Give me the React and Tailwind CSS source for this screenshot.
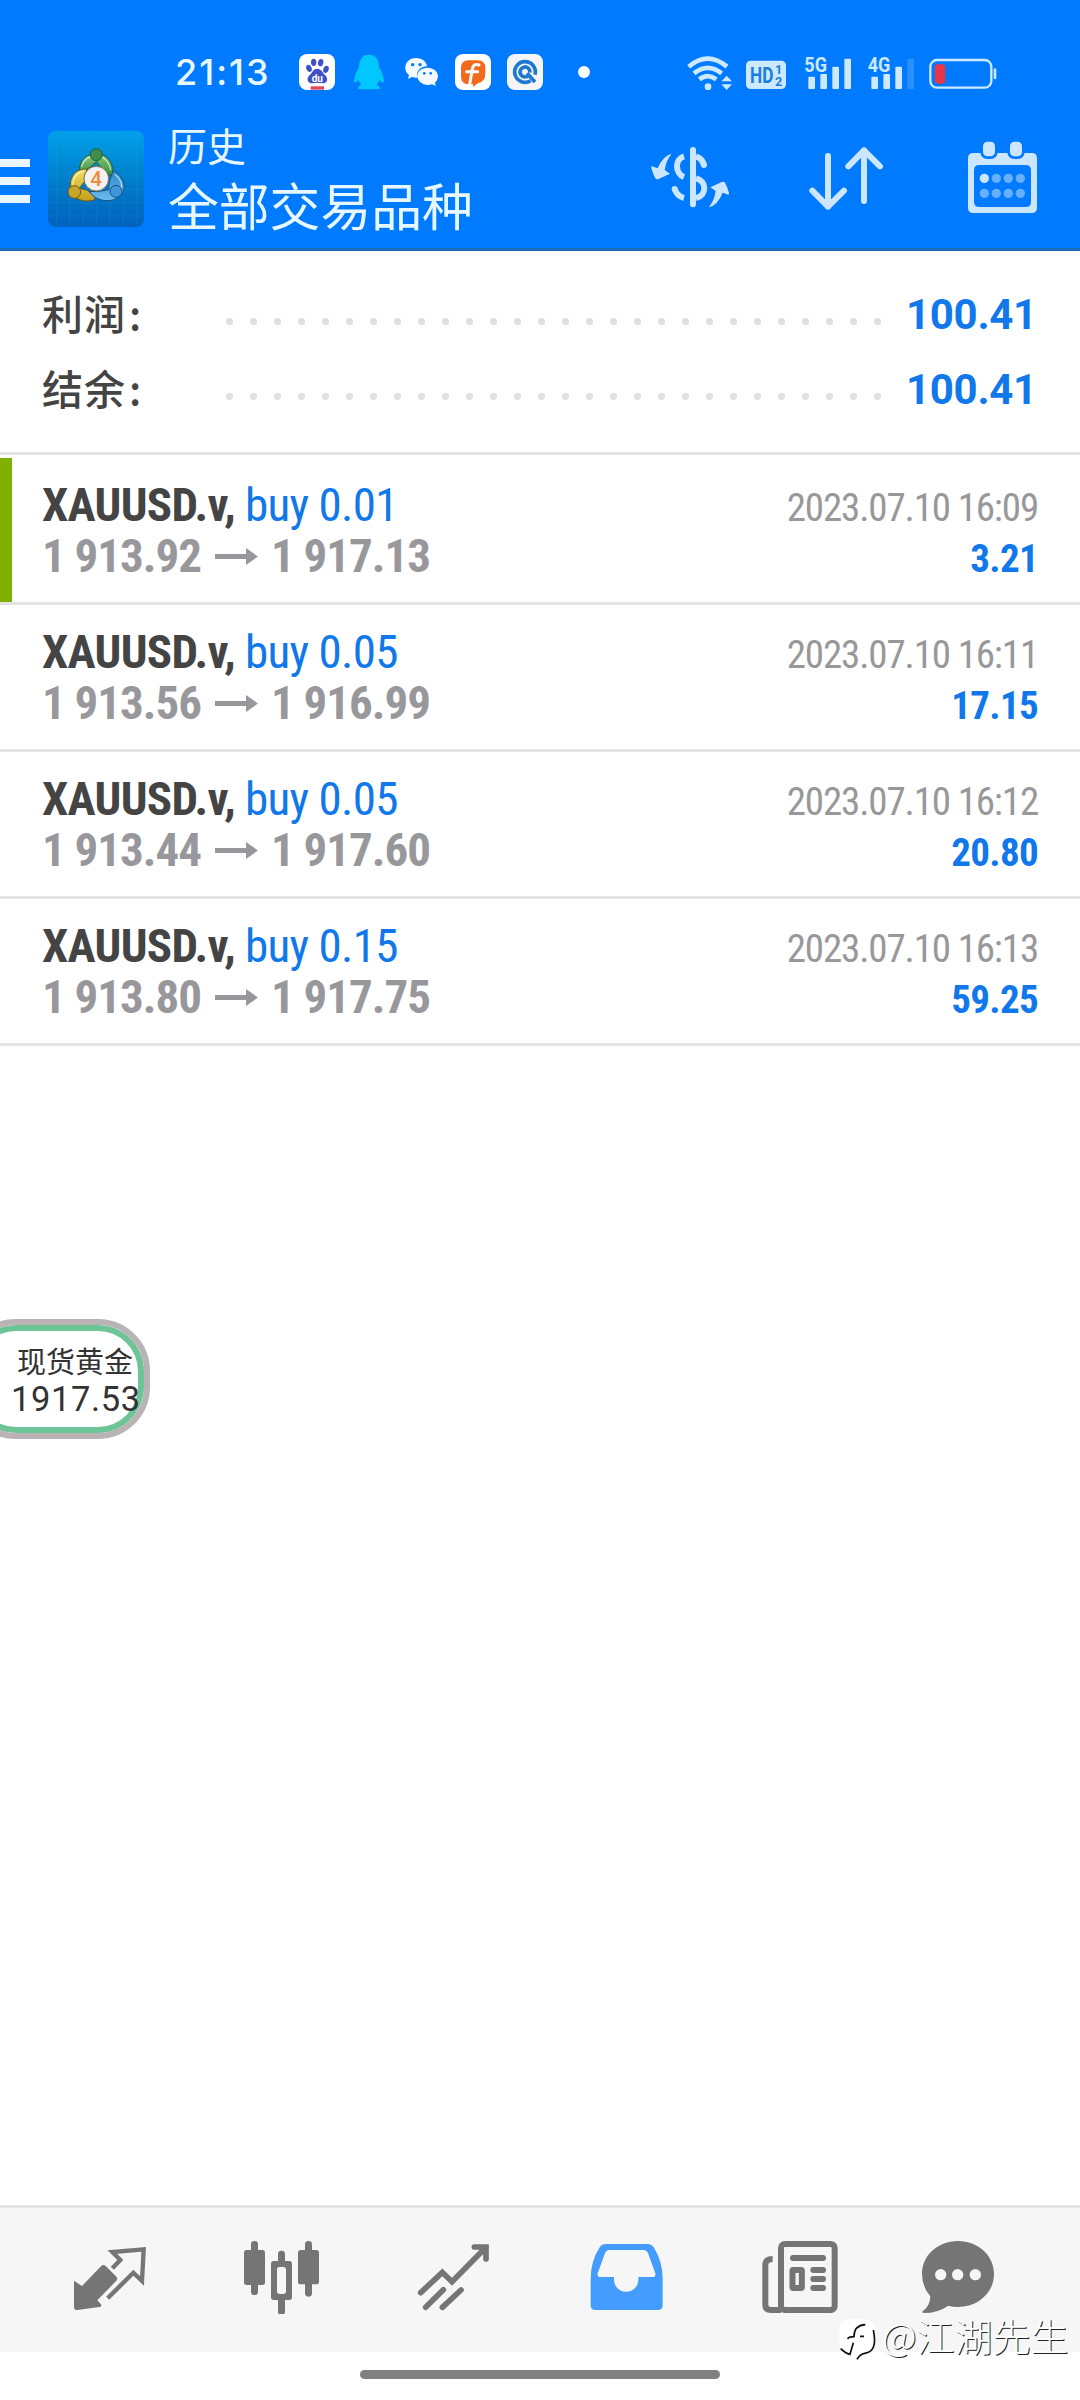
import React from 'react';

const deals = [
  { id: 1, symbol: 'XAUUSD.v', side: 'buy 0.01', open: '1 913.92', close: '1 917.13', time: '2023.07.10 16:09', profit: '3.21', active: true },
  { id: 2, symbol: 'XAUUSD.v', side: 'buy 0.05', open: '1 913.56', close: '1 916.99', time: '2023.07.10 16:11', profit: '17.15' },
  { id: 3, symbol: 'XAUUSD.v', side: 'buy 0.05', open: '1 913.44', close: '1 917.60', time: '2023.07.10 16:12', profit: '20.80' },
  { id: 4, symbol: 'XAUUSD.v', side: 'buy 0.15', open: '1 913.80', close: '1 917.75', time: '2023.07.10 16:13', profit: '59.25' },
];

const summary = [
  { label: '利润', value: '100.41' },
  { label: '结余', value: '100.41' },
];

const StatusBar = () => (
  <div className="flex items-center h-[110px] pt-[34px] pl-[175px]">
    <span className="w-[124px] text-[36px] leading-none font-medium tracking-[2px] text-[#e8f8ff] font-['Inter',sans-serif]">21:13</span>
    <div className="flex gap-4">
      {/* Baidu */}
      <svg className="w-9 h-9" viewBox="0 0 108 108">
        <rect width="108" height="108" rx="24" fill="#fff" />
        <g fill="#3f51c8">
          <ellipse cx="30" cy="43" rx="8" ry="11" transform="rotate(-20 30 43)" />
          <ellipse cx="44" cy="25" rx="8" ry="11" />
          <ellipse cx="65" cy="26" rx="8" ry="11" transform="rotate(12 65 26)" />
          <ellipse cx="81" cy="46" rx="8" ry="11" transform="rotate(20 81 46)" />
          <path d="M55 44C68 44 70 56 78 63C90 75 84 88 72 88Q55 85 40 88C26 88 20 75 32 63C41 55 42 44 55 44Z" />
        </g>
        <text x="55" y="83" textAnchor="middle" fontSize="30" fontWeight="bold" fill="#fff" fontFamily="Roboto, sans-serif">du</text>
        <rect x="35" y="97" width="40" height="10" fill="#e0455a" />
      </svg>
      {/* QQ */}
      <svg className="w-9 h-9" viewBox="0 0 108 108">
        <path d="M54 2C76 2 84 20 84 40Q98 62 99 84Q96 90 86 78Q83 86 77 92Q88 97 86 106H22Q20 97 31 92Q25 86 22 78Q12 90 9 84Q10 62 24 40C24 20 32 2 54 2Z" fill="#00c8ff" />
      </svg>
      {/* WeChat */}
      <svg className="w-9 h-9" viewBox="0 0 108 108">
        <path d="M39 12C58 12 71 24 72 37C50 38 38 54 44 71Q36 72 27 69L15 75L18 64C-4 46 8 12 39 12Z" fill="#f2faff" />
        <path d="M73 41C92 41 105 53 105 67Q105 78 96 86L98 96L87 91C64 98 43 84 43 67C43 53 55 41 73 41Z" fill="#f2faff" />
        <g fill="#007aff">
          <circle cx="29" cy="32" r="5" />
          <circle cx="51" cy="32" r="5" />
          <circle cx="64" cy="58" r="4" />
          <circle cx="83" cy="58" r="4" />
        </g>
      </svg>
      <svg className="w-9 h-9" viewBox="0 0 108 108">
        <rect width="108" height="108" rx="24" fill="#fff" />
        <path d="M40 19H68Q91 19 91 42V60Q91 84 66 89L54 99V91H40Q18 91 18 66V42Q18 19 40 19Z" fill="#f26a1b" />
        <path d="M72 33C60 28 54 34 52 46L44 91M35 53H68" fill="none" stroke="#fff" strokeWidth="9" strokeLinecap="round" />
      </svg>
      <svg className="w-9 h-9" viewBox="0 0 108 108">
        <rect width="108" height="108" rx="24" fill="#f3f5f8" />
        <path d="M71 80A31 31 0 1 1 84 62" fill="none" stroke="#1f78cf" strokeWidth="11" />
        <path d="M66 63A15 15 0 1 1 69 55M60 58L84 84" fill="none" stroke="#1f78cf" strokeWidth="11" />
      </svg>
    </div>
    <span className="w-3 h-3 ml-[35px] rounded-full bg-white" />

    {/* wifi */}
    <svg className="w-[46px] h-[36px] ml-[97px]" viewBox="80 36 138 108">
      <g fill="none" stroke="#cce9ff" strokeWidth="14">
        <path d="M85 74Q142 26 200 74" />
        <path d="M101 94Q142 61 184 94" />
        <path d="M117 112Q142 93 168 112" />
      </g>
      <circle cx="143" cy="134" r="10" fill="#cce9ff" />
      <path d="M183 118L199 101L215 118ZM183 127H215L199 144Z" fill="#cce9ff" />
    </svg>
    <svg className="w-[40px] h-[36px] ml-[13px]" viewBox="258 36 120 108">
      <rect x="258" y="56" width="120" height="85" rx="14" fill="#cce9ff" />
      <text x="270" y="122" fontSize="66" fontWeight="bold" fill="#1a7de0" textLength="70" lengthAdjust="spacingAndGlyphs" fontFamily="Roboto, sans-serif">HD</text>
      <text x="345" y="95" fontSize="38" fontWeight="bold" fill="#1a7de0" fontFamily="Roboto, sans-serif">1</text>
      <text x="345" y="131" fontSize="38" fontWeight="bold" fill="#1a7de0" fontFamily="Roboto, sans-serif">2</text>
    </svg>
    <svg className="w-[48px] h-[36px] ml-[18px]" viewBox="432 36 144 108">
      <g fill="#cce9ff">
        <rect x="445" y="104" width="20" height="37" rx="3" />
        <rect x="481" y="96" width="20" height="45" rx="3" />
        <rect x="517" y="74" width="20" height="67" rx="3" />
        <rect x="553" y="50" width="20" height="91" rx="3" />
        <text x="433" y="91" fontSize="62" fontWeight="bold" textLength="68" lengthAdjust="spacingAndGlyphs" fontFamily="Roboto, sans-serif">5G</text>
      </g>
    </svg>
    <svg className="w-[48px] h-[36px] ml-[15px]" viewBox="621 36 144 108">
      <g fill="#cce9ff">
        <rect x="634" y="104" width="20" height="37" rx="3" />
        <rect x="670" y="96" width="20" height="45" rx="3" />
        <rect x="706" y="74" width="20" height="67" rx="3" />
        <rect x="742" y="50" width="20" height="91" rx="3" opacity="0.2" />
        <text x="623" y="91" fontSize="62" fontWeight="bold" textLength="68" lengthAdjust="spacingAndGlyphs" fontFamily="Roboto, sans-serif">4G</text>
      </g>
    </svg>
    <svg className="w-[68px] h-[36px] ml-[14px]" viewBox="809 36 204 108">
      <rect x="813" y="54" width="183" height="83" rx="20" fill="none" stroke="#cce9ff" strokeWidth="7" />
      <rect x="1003" y="79" width="8" height="33" rx="4" fill="#cce9ff" />
      <rect x="826" y="67" width="32" height="58" rx="10" fill="#e8364c" />
    </svg>
  </div>
);

const AppLogo = () => (
  <svg className="w-24 h-24 ml-[18px]" viewBox="0 0 288 288">
    <defs>
      <linearGradient id="logoBg" x1="0" y1="0" x2="0" y2="1">
        <stop offset="0" stopColor="#00a0ea" />
        <stop offset="0.5" stopColor="#007fcb" />
        <stop offset="1" stopColor="#0062bd" />
      </linearGradient>
      <linearGradient id="logoGreen" x1="0" y1="0" x2="0" y2="1">
        <stop offset="0" stopColor="#8cc97e" />
        <stop offset="1" stopColor="#2f8a35" />
      </linearGradient>
      <linearGradient id="logoYellow" x1="0" y1="0" x2="0" y2="1">
        <stop offset="0" stopColor="#f0df62" />
        <stop offset="1" stopColor="#c39f1a" />
      </linearGradient>
      <linearGradient id="logoBlue" x1="0" y1="0" x2="0" y2="1">
        <stop offset="0" stopColor="#2a86cc" />
        <stop offset="1" stopColor="#6dbcf0" />
      </linearGradient>
    </defs>
    <rect width="288" height="288" rx="24" fill="url(#logoBg)" />
    <path d="M25 0V288M65 0V288M105 0V288M145 0V288M185 0V288M225 0V288M265 0V288M0 15H288M0 55H288M0 95H288M0 135H288M0 175H288M0 215H288M0 255H288" stroke="#4ab4ee" strokeOpacity="0.18" strokeWidth="2" />
    <g strokeWidth="3">
      <path d="M94 116C96 84 118 68 145 68C178 68 200 98 195 138L166 120L146 92L122 112L110 118Z" fill="url(#logoGreen)" stroke="#1f5f3a" />
      <path d="M116 114C82 112 62 140 68 176C72 200 100 216 136 208L142 200L118 178L94 172L112 148Z" fill="url(#logoYellow)" stroke="#6b5c1c" />
      <path d="M196 118C222 132 234 160 226 182C212 216 150 220 124 182L160 180L182 176L184 150Z" fill="url(#logoBlue)" stroke="#14507f" />
      <g fill="none" stroke="#fff" strokeOpacity="0.6" strokeWidth="4">
        <path d="M101 108C106 84 124 75 145 75C168 75 184 92 188 118" />
        <path d="M106 121C84 124 72 146 75 170M200 130C216 142 224 158 220 176" />
      </g>
      <circle cx="145" cy="71" r="18" fill="#3f8f4a" stroke="#1f5f3a" />
      <circle cx="79" cy="183" r="19" fill="#c8a428" stroke="#6b5c1c" />
      <circle cx="204" cy="181" r="18" fill="#3f98dd" stroke="#14507f" />
      <circle cx="145" cy="143" r="37" fill="#f4f2f0" stroke="#7d6a4a" />
    </g>
    <text x="144" y="165" textAnchor="middle" fontSize="62" fontWeight="500" fill="#f08c3c" fontFamily="Roboto, sans-serif">4</text>
  </svg>
);

const Header = () => (
  <header className="h-[251px] bg-[#007aff] border-b-3 border-[#1a6eb8]">
    <StatusBar />
    <div className="flex items-start pt-[21px]">
      <div className="flex flex-col gap-[10px] mt-7">
        <span className="w-[30px] h-2 bg-[#e9f6ff]" />
        <span className="w-[30px] h-2 bg-[#e9f6ff]" />
        <span className="w-[30px] h-2 bg-[#e9f6ff]" />
      </div>
      <AppLogo />
      <div className="w-[504px] pl-6 -mt-[16px] text-[#e6f7ff] font-['Noto_Sans_CJK_SC',sans-serif]">
        <div className="text-[39px] leading-[58px]">历史</div>
        <div className="text-[50.8px] leading-[62px]">全部交易品种</div>
      </div>
      <div className="flex gap-[72px] mt-1">
        {/* Currency exchange */}
        <svg className="w-[84px] h-[84px]" viewBox="0 0 252 252">
          <g fill="none" stroke="#cce6ff" strokeWidth="18">
            <path d="M108 64C80 72 80 115 108 126" />
            <path d="M80 162Q88 184 108 189" strokeLinecap="butt" />
            <path d="M144 64Q163 70 168 91" />
            <path d="M144 130C177 138 177 182 144 189" />
          </g>
          <circle cx="80" cy="162" r="9" fill="#cce6ff" />
          <circle cx="168" cy="90" r="9" fill="#cce6ff" />
          <rect x="126" y="36" width="18" height="181" rx="9" fill="#cce6ff" />
          <path d="M71 56Q44 62 29 100L12 94Q8 95 11 102Q15 118 22 130Q25 134 32 132L66 116L50 105Q54 76 71 56Z" fill="#cce6ff" />
          <path d="M71 56Q44 62 29 100L12 94Q8 95 11 102Q15 118 22 130Q25 134 32 132L66 116L50 105Q54 76 71 56Z" fill="#cce6ff" transform="rotate(180 126.500 136.500)" />
        </svg>
        {/* Sort */}
        <svg className="w-[84px] h-[84px]" viewBox="0 0 252 252" fill="none" stroke="#cce6ff" strokeWidth="18" strokeLinecap="round" strokeLinejoin="round">
          <path d="M72 63V215M25 167L72 215L120 167" />
          <path d="M180 198V46M133 94L180 46L228 94" />
        </svg>
        {/* Calendar */}
        <svg className="w-[84px] h-[84px]" viewBox="0 0 252 252" fill="#cce6ff">
          <path fillRule="evenodd" d="M40 54H215Q231 54 231 70V218Q231 234 215 234H40Q24 234 24 218V70Q24 54 40 54ZM58 90Q42 90 42 106V200Q42 216 58 216H197Q213 216 213 200V106Q213 90 197 90Z" />
          <rect x="65" y="16" width="44" height="52" rx="17" stroke="#007aff" strokeWidth="8" />
          <rect x="146" y="16" width="44" height="52" rx="17" stroke="#007aff" strokeWidth="8" />
          <circle cx="73" cy="130" r="14" />
          <g opacity="0.5">
            <circle cx="109" cy="130" r="14" />
            <circle cx="145" cy="130" r="14" />
            <circle cx="181" cy="130" r="14" />
            <circle cx="73" cy="175" r="14" />
            <circle cx="109" cy="175" r="14" />
            <circle cx="145" cy="175" r="14" />
            <circle cx="181" cy="175" r="14" />
          </g>
        </svg>
      </div>
    </div>
  </header>
);

const Summary = () => (
  <section className="h-[204px] pt-[24px] border-b-3 border-[#e4e4e4]">
    {summary.map((item) => (
      <div key={item.label} className="flex items-center h-[75px] pl-[42px]">
        <span className="w-[184px] -mt-px text-[41px] leading-none font-medium tracking-[1px] text-[#444] font-['Noto_Sans_CJK_SC',sans-serif]">
          {item.label}<span className="ml-[3px]">:</span>
        </span>
        <div className="flex gap-[17px] mt-[18px]">
          {Array.from({ length: 28 }, (_, i) => (
            <span key={i} className="w-[7px] h-[7px] rounded-full bg-[#e0e0e0]" />
          ))}
        </div>
        <span className="ml-[25px] mt-1 text-[42px] leading-none font-bold -tracking-[0.3px] text-[#1078ea] font-['Roboto',sans-serif]">{item.value}</span>
      </div>
    ))}
  </section>
);

const DealRow = ({ deal }) => (
  <div className="flex justify-between h-[147px] border-b-3 border-[#e4e4e4] font-['Roboto_Condensed','Roboto',sans-serif] font-stretch-condensed whitespace-nowrap">
    <div className="flex">
      <span className={deal.active ? 'w-3 bg-[#80b000]' : 'w-3'} />
      <div className="pl-[30px] pt-[21px] text-[47px] leading-[51px] -tracking-[0.7px]">
        <div>
          <span className="font-bold text-[#444]">{deal.symbol},</span>{' '}
          <span className="text-[#1078ea]">{deal.side}</span>
        </div>
        <div className="flex items-center font-bold -tracking-[1px] text-[#98989c]">
          <span>{deal.open}</span>
          <svg className="w-[43px] h-[17px] mt-px ml-[14px] mr-[13px]" viewBox="0 0 43 17" fill="currentColor">
            <path d="M0 6H31V0L43 8.500L31 17V11H0Z" />
          </svg>
          <span>{deal.close}</span>
        </div>
      </div>
    </div>
    <div className="pr-[42px] pt-[25px] text-right text-[39px] leading-[51px]">
      <div className="-tracking-[1.15px] text-[#98989a]">{deal.time}</div>
      <div className="font-bold -tracking-[0.7px] text-[#1078ea]">{deal.profit}</div>
    </div>
  </div>
);

const BottomNav = () => (
  <nav className="flex gap-[88px] h-[147px] pt-[22px] pl-[68px] bg-[#f6f6f6] border-t-3 border-[#e4e4e4] text-[#757575]">
    {/* Quotes */}
    <svg className="w-[84px] h-[84px]" viewBox="0 0 252 252" fill="currentColor">
      <path d="M18 152L42 168L99 109Q106 102 113 108L144 139Q151 146 144 153L88 211L100 224Q101 230 94 231L28 240Q18 240 18 230Z" />
      <path d="M133 115L157 90L133 66L227 58L222 153L196 128L119 205" fill="none" stroke="currentColor" strokeWidth="13" />
    </svg>
    {/* Charts */}
    <svg className="w-[84px] h-[84px]" viewBox="0 0 252 252" fill="currentColor">
      <rect x="33" y="33" width="21" height="162" rx="10" />
      <rect x="12" y="60" width="63" height="105" rx="8" />
      <rect x="114" y="62" width="21" height="193" rx="10" />
      <rect x="93" y="93" width="63" height="117" rx="8" />
      <rect x="111" y="111" width="27" height="81" rx="8" fill="#f6f6f6" />
      <rect x="195" y="33" width="21" height="167" rx="10" />
      <rect x="174" y="60" width="63" height="103" rx="8" />
    </svg>
    {/* Trade */}
    <svg className="w-[84px] h-[84px]" viewBox="0 0 252 252" fill="none" stroke="currentColor" strokeWidth="17" strokeLinecap="round">
      <path d="M26 188L91 127L120 155L222 52M187 51H222V87M41 232L94 179M91 232L147 180" />
    </svg>
    {/* History */}
    <svg className="w-[84px] h-[84px] text-[#449cff]" viewBox="0 0 252 252" fill="currentColor">
      <path fillRule="evenodd" d="M66 42H190Q202 42 209 52Q236 95 236 145V226Q236 240 222 240H34Q20 240 20 226V145Q20 95 47 52Q54 42 66 42ZM77 60Q67 60 63 70L41 130Q39 141 49 141H90V149A36.500 36.500 0 0 0 163 149V141H206Q216 141 214 130L192 70Q188 60 178 60Z" />
    </svg>
    {/* News */}
    <svg className="w-[84px] h-[84px]" viewBox="0 0 252 252" fill="currentColor">
      <g fill="none" stroke="currentColor" strokeWidth="18">
        <rect x="75" y="42" width="161" height="198" rx="12" />
        <path d="M50 87Q28 87 28 105V225Q28 240 45 240H76" />
        <rect x="109.500" y="120" width="28" height="54" rx="2" />
      </g>
      <rect x="102" y="75" width="108" height="18" rx="9" />
      <rect x="163" y="111" width="47" height="18" rx="9" />
      <rect x="163" y="138" width="47" height="18" rx="9" />
      <rect x="163" y="165" width="47" height="18" rx="9" />
    </svg>
    {/* Chat */}
    <svg className="w-[84px] h-[84px] -ml-3" viewBox="0 0 252 252" fill="currentColor">
      <path d="M126 33C186 33 234 76 234 132C234 188 186 231 126 231Q110 231 97 227Q65 249 24 249Q15 248 21 243Q42 228 43 199Q18 170 18 132C18 76 66 33 126 33Z" />
      <g fill="#f6f6f6">
        <circle cx="74" cy="134" r="17" />
        <circle cx="125" cy="134" r="17" />
        <circle cx="178" cy="134" r="17" />
      </g>
    </svg>
  </nav>
);

const PriceBubble = () => (
  <div className="absolute -left-9 top-[1319px] w-[186px] h-[120px] pt-[16px] pl-[41px] rounded-[52px] border-[6px] border-[#b9b3b5] bg-white shadow-[inset_0_0_0_6px_#6cc497] text-[#333] whitespace-nowrap">
    <div className="w-[124px] pl-[4px] text-center text-[29px] leading-[38px] font-['Noto_Sans_CJK_SC',sans-serif]">现货黄金</div>
    <div className="text-[34.5px] leading-[40px] tracking-[0.6px] font-['Roboto',sans-serif]">1917.53</div>
  </div>
);

const Watermark = () => (
  <div className="absolute left-[838px] top-[2311px] flex items-center h-[48px] whitespace-nowrap">
    <svg className="w-[42px] h-[46px] mt-[8px]" viewBox="0 0 126 138">
      <path d="M30 10H84Q112 14 112 48V78Q108 106 84 112L60 128L52 112H30Q4 106 4 80V42Q4 14 30 10Z" fill="#fff" />
      <path d="M29 69Q31 62 48 62Q48 28 82 26M66 61H78M46 80L36 115Q22 112 8 98M106 42Q120 108 80 112Q66 114 57 130" fill="none" stroke="#111" strokeWidth="5" />
    </svg>
    <span className="ml-[2px] text-[38px] leading-none font-light text-white font-['Noto_Sans_CJK_SC',sans-serif] [text-shadow:1px_1px_0_#222]">@江湖先生</span>
  </div>
);

const App = () => {
  return (
    <div className="relative flex flex-col w-[1080px] h-[2400px] bg-white overflow-hidden">
      <Header />
      <Summary />
      <main className="flex-1 pt-[3px]">
        {deals.map((deal) => (
          <DealRow key={deal.id} deal={deal} />
        ))}
      </main>
      <BottomNav />
      <div className="flex justify-center h-12 pt-[18px]">
        <span className="w-[360px] h-[9px] rounded-full bg-[#808080]" />
      </div>
      <PriceBubble />
      <Watermark />
    </div>
  );
};

export default App;
